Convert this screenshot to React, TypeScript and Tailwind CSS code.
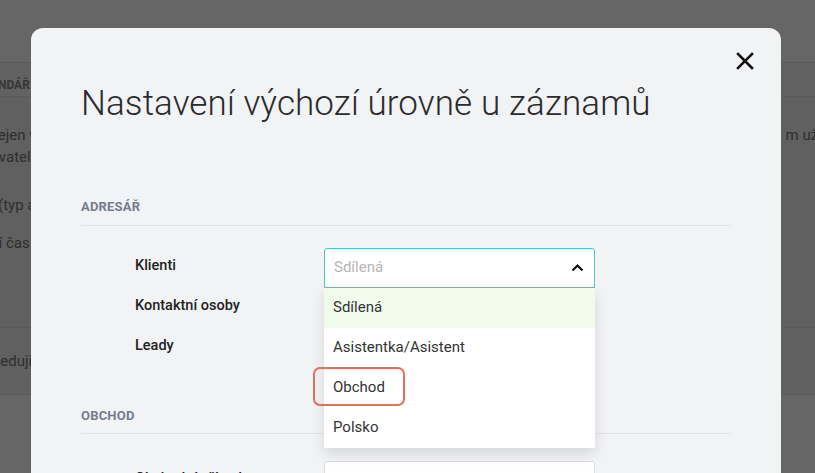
import { ReactNode } from 'react';

const font = { fontFamily: 'Roboto, "Noto Sans", sans-serif' };

function CloseIcon() {
  return (
    <svg width="18" height="18" viewBox="0 0 18 18" fill="none">
      <path d="M2 2L16 16M16 2L2 16" stroke="#111" strokeWidth="2.6" strokeLinecap="square" />
    </svg>
  );
}

function ChevronUp() {
  return (
    <svg width="13" height="9" viewBox="0 0 13 9" fill="none">
      <path d="M1.5 7.5L6.5 2.5L11.5 7.5" stroke="#111" strokeWidth="2.2" />
    </svg>
  );
}

function SectionTitle({ children }: { children: ReactNode }) {
  return (
    <div className="border-b border-[#e1e3e8] pb-[8px] text-[13px] font-bold tracking-[0.2px] text-[#767c8c]">
      {children}
    </div>
  );
}

function Row({ label, children }: { label: string; children?: ReactNode }) {
  return (
    <div className="flex h-10 items-center">
      <div className="w-[243px] pl-[54px] text-[14.5px] font-medium text-[#222]">{label}</div>
      <div className="mt-[4px] w-[271px]">{children}</div>
    </div>
  );
}

const options = ['Sdílená', 'Asistentka/Asistent', 'Obchod', 'Polsko'];

function OpenSelect() {
  return (
    <div className="relative">
      <div className="flex h-10 items-center justify-between rounded-t-[3px] border border-[#4cc3c9] bg-white pl-[9px] pr-[10px] text-[15px] text-[#b5b5b5]">
        <span>Sdílená</span>
        <ChevronUp />
      </div>
      <div className="absolute left-0 top-10 z-10 w-full rounded-b-[4px] bg-white shadow-[0_6px_14px_rgba(0,0,0,0.12)]">
        {options.map((o, i) => (
          <div
            key={o}
            className={
              'flex h-10 items-center pl-[9px] text-[15px] text-[#333] ' +
              (i === 0 ? 'bg-[#f1fbec]' : 'bg-white')
            }
          >
            {o}
          </div>
        ))}
        <div className="absolute left-[-11px] top-[79px] h-[39px] w-[92px] rounded-[7px] border-[2.5px] border-[#e4705a]" />
      </div>
    </div>
  );
}

function ClosedSelect() {
  return (
    <div className="flex h-10 items-center rounded-[3px] border border-[#dcdde1] bg-white pl-[9px] text-[15px] text-[#333]">
      Sdílená
    </div>
  );
}

function BackgroundPage() {
  return (
    <div className="flex h-full flex-col text-[15px] text-[#2e2e2e]">
      <div className="h-[62px] shrink-0 bg-[#666]" />
      <div className="flex h-[35px] shrink-0 items-center border-y border-[#5b5b5b] bg-[#626262] pt-[10px] text-[12px] font-bold text-[#353535]">
        <span className="-ml-[31px]">KALENDÁŘ</span>
      </div>
      <div className="flex h-[230px] shrink-0 flex-col bg-[#606060] pt-[27px]">
        <div className="flex justify-between leading-[22px]">
          <span className="-ml-[13px]">Nejen v</span>
          <span className="-mr-[60px]">m uživatelům</span>
        </div>
        <div className="leading-[22px]">
          <span className="-ml-[22px] inline-block">Uživatel</span>
        </div>
        <div className="mt-[26px] leading-[22px]">
          <span className="-ml-[2px] inline-block">(typ akce)</span>
        </div>
        <div className="mt-[16px] leading-[22px]">
          <span className="-ml-[50px] inline-block">Výchozí čas</span>
        </div>
      </div>
      <div className="flex h-[68px] shrink-0 items-center border-y border-[#5a5a5a] bg-[#606060]">
        <span className="-ml-[30px] inline-block">Následuji</span>
      </div>
      <div className="flex-1 bg-[#666]" />
    </div>
  );
}

export default function App() {
  return (
    <div className="relative h-[473px] w-[815px] overflow-hidden bg-[#666]" style={font}>
      <BackgroundPage />
      <div className="absolute left-[31px] top-[28px] h-[520px] w-[750px] rounded-[12px] bg-[#f2f3f5]">
        <div className="flex justify-end pr-[27px] pt-[24px]">
          <CloseIcon />
        </div>
        <div className="px-[50px]">
          <h1 className="mt-[12px] text-[35px] font-light leading-[44px] tracking-[0.1px] text-[#2b2b2d]">
            Nastavení výchozí úrovně u záznamů
          </h1>
          <div className="mt-[71px]">
            <SectionTitle>ADRESÁŘ</SectionTitle>
          </div>
          <div className="mt-[20px] flex flex-col">
            <Row label="Klienti">
              <OpenSelect />
            </Row>
            <Row label="Kontaktní osoby" />
            <Row label="Leady" />
          </div>
          <div className="mt-[40px]">
            <SectionTitle>OBCHOD</SectionTitle>
          </div>
          <div className="mt-[25px] flex flex-col">
            <Row label="Obchodní případ">
              <ClosedSelect />
            </Row>
          </div>
        </div>
      </div>
    </div>
  );
}
